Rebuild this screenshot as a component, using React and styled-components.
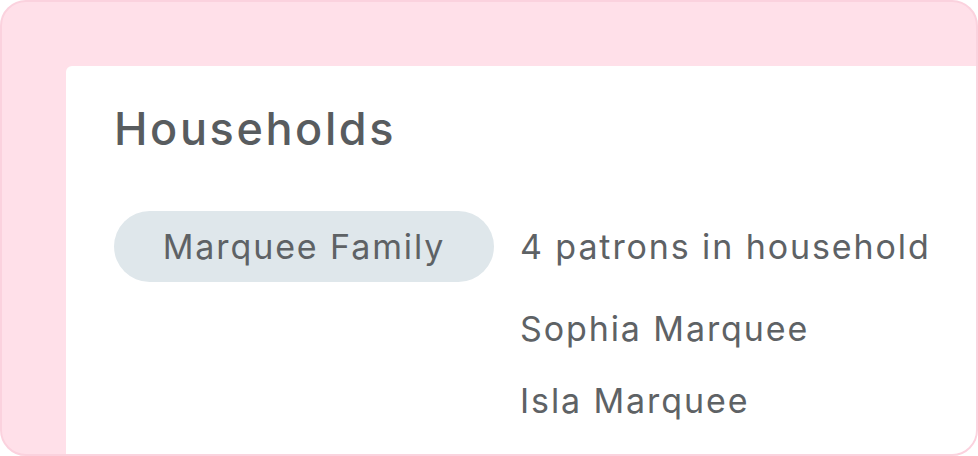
import React from 'react';
import styled, { createGlobalStyle } from 'styled-components';

const GlobalStyle = createGlobalStyle`
    html, body {
        margin: 0;
        padding: 0;
        background: #ffffff;
    }
    body {
        font-family: Inter, "Noto Sans", sans-serif;
    }
`;

const Frame = styled.div`
    width: 978px;
    height: 456px;
    box-sizing: border-box;
    border: 2px solid #fbd2de;
    border-radius: 26px;
    background: #ffe0e9;
    padding: 64px 0 0 64px;
    overflow: hidden;
    display: flex;
`;

const Card = styled.div`
    flex: 1;
    background: #ffffff;
    border-top-left-radius: 6px;
    padding: 35px 0 0 48px;
    color: #5e6265;
`;

const Title = styled.h1`
    margin: 0;
    font-size: 45px;
    font-weight: 500;
    line-height: 56px;
    letter-spacing: 2.6px;
    color: #585c5f;
`;

const HouseholdRow = styled.div`
    display: flex;
    align-items: flex-start;
    gap: 26px;
    margin-top: 54px;
`;

const Pill = styled.div`
    width: 380px;
    height: 71px;
    border-radius: 36px;
    background: #dfe7eb;
    display: flex;
    align-items: center;
    justify-content: center;
    font-size: 34px;
    font-weight: 400;
    letter-spacing: 1.9px;
    color: #5e6265;
`;

const Members = styled.div`
    display: flex;
    flex-direction: column;
`;

const MemberLine = styled.div`
    font-size: 34px;
    letter-spacing: 1.9px;
    line-height: ${(p) => (p.$lead ? '71px' : '72px')};
    margin-bottom: ${(p) => (p.$lead ? '11px' : '0')};
    color: #5e6265;
`;

const household = {
    name: 'Marquee Family',
    count: 4,
    members: ['Sophia Marquee', 'Isla Marquee'],
};

const App = () => (
    <>
        <GlobalStyle />
        <Frame>
            <Card>
                <Title>Households</Title>
                <HouseholdRow>
                    <Pill>{household.name}</Pill>
                    <Members>
                        <MemberLine $lead>{`${household.count} patrons in household`}</MemberLine>
                        {household.members.map((m) => (
                            <MemberLine key={m}>{m}</MemberLine>
                        ))}
                    </Members>
                </HouseholdRow>
            </Card>
        </Frame>
    </>
);

export default App;
